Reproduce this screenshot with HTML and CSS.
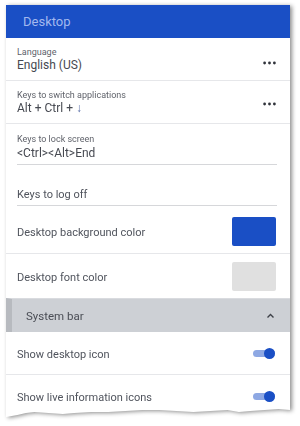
FILE: index.html
```html
<!doctype html>
<html lang="en">
	<head>
		<meta charset="utf-8">
		<meta name="viewport" content="width=device-width, initial-scale=1">
		<title>Desktop settings</title>
		<link rel="stylesheet" href="styles.css">
	</head>
	<body>

		<div class="sheet">
			<div class="panel">

				<header class="header">Desktop</header>

				<div class="row pick">
					<div class="pick-text">
						<div class="small">Language</div>
						<div class="value">English (US)</div>
					</div>
					<svg class="more" width="13" height="4" viewBox="0 0 13 4"><circle cx="1.6" cy="2" r="1.4"/><circle cx="6.5" cy="2" r="1.4"/><circle cx="11.4" cy="2" r="1.4"/></svg>
				</div>

				<div class="row pick">
					<div class="pick-text">
						<div class="small">Keys to switch applications</div>
						<div class="value">Alt + Ctrl + <span class="arrow">↓</span></div>
					</div>
					<svg class="more more-low" width="13" height="4" viewBox="0 0 13 4"><circle cx="1.6" cy="2" r="1.4"/><circle cx="6.5" cy="2" r="1.4"/><circle cx="11.4" cy="2" r="1.4"/></svg>
				</div>

				<div class="field field-lock">
					<div class="field-input">
						<div class="small">Keys to lock screen</div>
						<div class="value value-lock">&lt;Ctrl&gt;&lt;Alt&gt;End</div>
					</div>
				</div>

				<div class="field field-logoff">
					<div class="field-input">
						<div class="plain">Keys to log off</div>
					</div>
				</div>

				<div class="row color">
					<span class="plain">Desktop background color</span>
					<span class="swatch swatch-blue"></span>
				</div>

				<div class="row color color-last">
					<span class="plain">Desktop font color</span>
					<span class="swatch swatch-grey"></span>
				</div>

				<div class="section">
					<span class="section-title">System bar</span>
					<svg class="chevron" width="9" height="6" viewBox="0 0 9 6"><polyline points="1.5,4.5 4.5,1.5 7.5,4.5"/></svg>
				</div>

				<div class="row switch-row">
					<span class="plain">Show desktop icon</span>
					<span class="switch"><span class="knob"></span></span>
				</div>

				<div class="row switch-row last">
					<span class="plain">Show live information icons</span>
					<span class="switch"><span class="knob"></span></span>
				</div>

			</div>
		</div>

	</body>
</html>
```

FILE: styles.css
```css
/* -------------------------------------------------- */

:root
{
	--blue: #1a4fc5;
	--text: #50545d;
	--line: #e6e7ea;
}

*, *::before, *::after { box-sizing: border-box; }

body
{
	margin: 0;
	background: #fff;
	font-family: Roboto, "Liberation Sans", sans-serif;
	color: var( --text );
}

/* -------------------------------------------------- */

.sheet
{
	padding: 5px 0 0 6px;
	width: 296px;
	filter: drop-shadow( 2px 1px 2px rgba( 0,0,0 , 0.45 ) );
}

.panel
{
	width: 284px;
	height: 418px;
	background: #fff;
	clip-path: polygon(
		0 0, 100% 0, 100% 405px,
		96% 404px, 91% 405px, 86% 406px, 82% 407px, 78% 405px,
		72% 406px, 66% 407px, 60% 406px, 54% 405px, 48% 405px,
		42% 406px, 36% 407px, 30% 407px, 24% 408px, 20% 409px,
		15% 408px, 10% 407px, 7% 408px, 4% 410px, 0 412px
	);
}

/* -------------------------------------------------- */

.header
{
	height: 33px;
	padding-left: 17px;
	line-height: 33px;
	font-size: 13px;
	background: var( --blue );
	color: #a3b9ee;
}

.row
{
	display: flex;
	align-items: center;
	justify-content: space-between;
	padding: 0 14px 0 11px;
	border-bottom: 1px solid var( --line );
}

.small
{
	font-size: 9px;
	line-height: 12px;
	color: #60636b;
}

.value
{
	font-size: 12px;
	line-height: 15px;
	color: #464951;
}

.plain
{
	font-size: 11px;
	line-height: 14px;
}

.row .plain { padding-top: 3px; }

.arrow { color: #5a6fa8; }

/* -------------------------------------------------- */

.pick { height: 43px; }

.more
{
	fill: #2f323a;
	margin-top: 8px;
}

.more-low { margin-top: 4px; }

/* -------------------------------------------------- */

.field { padding: 0 13px 0 11px; }

.field-input { border-bottom: 1px solid #d6d7da; }

.field-lock .field-input { padding: 9px 0 3px; }

.value-lock { margin-top: 1px; }

.field-logoff { margin-bottom: 4px; }

.field-logoff .field-input { padding: 23px 0 3px; }

/* -------------------------------------------------- */

.color { height: 44px; }

.color-last { border-bottom: none; }

.swatch
{
	width: 44px;
	height: 29px;
	border-radius: 2px;
}

.swatch-blue { background: var( --blue ); }
.swatch-grey { background: #e0e0e0; }

/* -------------------------------------------------- */

.section
{
	display: flex;
	align-items: center;
	justify-content: space-between;
	height: 34px;
	padding: 0 15px 0 14px;
	background: #cdd0d5;
	border-left: 6px solid #b7babf;
	border-top: 1px solid #d9dbdf;
}

.section-title
{
	font-size: 11.5px;
	color: #4a4d55;
}

.chevron
{
	fill: none;
	stroke: #3d4048;
	stroke-width: 1.4;
}

/* -------------------------------------------------- */

.switch-row { height: 43px; }

.switch-row.last { border-bottom: none; }

.switch
{
	display: flex;
	align-items: center;
	width: 22px;
	height: 7px;
	margin-right: 1px;
	border-radius: 4px;
	background: #8ea8e3;
	justify-content: flex-end;
}

.knob
{
	width: 11px;
	height: 11px;
	border-radius: 50%;
	background: var( --blue );
}

/* -------------------------------------------------- */
```
